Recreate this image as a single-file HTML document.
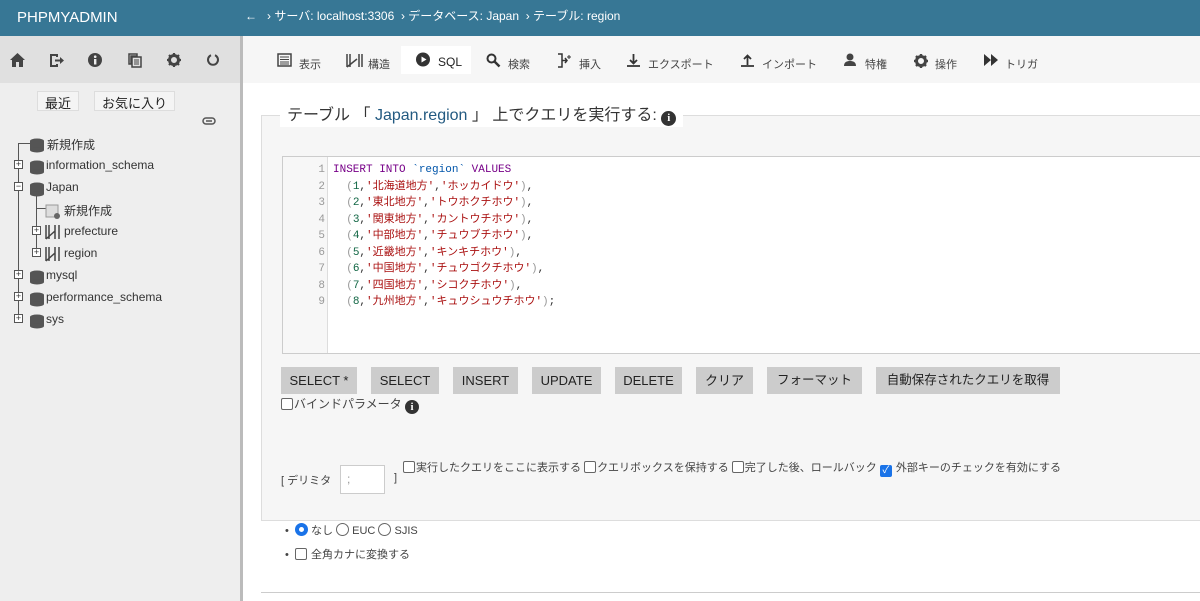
<!DOCTYPE html>
<html><head><meta charset="utf-8">
<style>
*{box-sizing:border-box;margin:0;padding:0}
body{width:1200px;height:601px;overflow:hidden;font-family:"Liberation Sans","Noto Sans CJK JP",sans-serif;font-size:12px;color:#333;background:#fff;position:relative}
.hdr{position:absolute;left:0;top:0;width:1200px;height:36px;background:#377795;color:#fff}
.logo{position:absolute;left:17px;top:9px;font-size:15px;letter-spacing:0}
.bc{position:absolute;left:245px;top:7px;font-size:12px}
.side{position:absolute;left:0;top:36px;width:240px;height:565px;background:#eee}
.sbar{position:absolute;left:240px;top:36px;width:3px;height:565px;background:#bbb}
.ibar{position:absolute;left:0;top:0;width:240px;height:47px;background:#e0e0e0}
.ibar svg{position:absolute;top:17px}
.sbtn{position:absolute;top:55px;height:20px;border:1px solid #ddd;background:#f4f4f4;font-size:13px;padding:1px 7px;color:#222}
.ti{position:absolute;font-size:12px;color:#333;white-space:nowrap}
.vl{position:absolute;background:#555;width:1px}
.hl{position:absolute;background:#555;height:1px}
.pm{position:absolute;width:9px;height:9px;border:1px solid #555;background:#fff;font-size:9px;line-height:7px;text-align:center;color:#333}
.tabs{position:absolute;left:243px;top:36px;width:957px;height:47px;background:#f6f6f6}
.tab{position:absolute;top:22px;font-size:11px;color:#444;white-space:nowrap}
.tab svg{position:absolute;left:-22px;top:-3px}
.sqlt{position:absolute;left:401px;top:46px;width:70px;height:28px;background:#fff}
.fs{position:absolute;left:261px;top:115px;width:960px;height:406px;background:#f6f6f6;border:1px solid #ddd}
.leg{position:absolute;left:280px;top:105px;background:#fff;padding:0 7px;font-size:16px;color:#333;height:22px;line-height:22px;white-space:nowrap}
.leg span{color:#235a81}
.ed{position:absolute;left:282px;top:156px;width:930px;height:198px;background:#fff;border:1px solid #ccc}
.gut{position:absolute;left:0;top:0;width:45px;height:196px;background:#f7f7f7;border-right:1px solid #ddd}
.code{position:absolute;left:0;top:5px;font-family:"Liberation Mono","Noto Sans CJK JP",monospace;font-size:11px;line-height:16.5px;white-space:pre}
.ln{position:absolute;left:0;width:42px;text-align:right;color:#999}
.cl{position:absolute;left:50px}
.k{color:#708}.v{color:#05a}.s{color:#a11}.n{color:#164}.p{color:#999}
.btn{position:absolute;top:367px;height:27px;background:#ccc;font-size:13px;line-height:27px;color:#222;white-space:nowrap;text-align:center}
.cb{display:inline-block;width:12px;height:12px;border:1px solid #666;border-radius:2px;background:#fff;vertical-align:-2px;margin-right:1px}
.t{position:absolute;font-size:11px;color:#444;white-space:nowrap}
.info{display:inline-block;width:14px;height:14px;border-radius:50%;background:#333;color:#fff;font-weight:bold;font-size:11px;line-height:14px;text-align:center;font-family:"Liberation Serif",serif;vertical-align:-2px}
.rad{display:inline-block;width:13px;height:13px;border:1px solid #666;border-radius:50%;background:#fff;vertical-align:-2px}
</style></head><body>
<div class="hdr"><div class="logo">PHPMYADMIN</div>
<div class="bc">←&nbsp;&nbsp;&nbsp;›&nbsp;サーバ: localhost:3306&nbsp;&nbsp;›&nbsp;データベース: Japan&nbsp;&nbsp;›&nbsp;テーブル: region</div></div>

<div class="side">
<div class="ibar">
<svg style="left:10px" width="15" height="14" viewBox="0 0 15 14"><path d="M7.5 0L0 7h2v7h4V9h3v5h4V7h2z" fill="#444"/></svg>
<svg style="left:49px" width="15" height="15" viewBox="0 0 15 15"><path d="M9 1H1v13h8v-3H7v1H3V3h4v1h2z M6 6.5h5V4l4 3.5-4 3.5V8.5H6z" fill="#444"/></svg>
<svg style="left:88px" width="14" height="14"><circle cx="7" cy="7" r="7" fill="#444"/><rect x="6" y="6" width="2.4" height="5.5" fill="#eee"/><circle cx="7.2" cy="3.7" r="1.3" fill="#eee"/></svg>
<svg style="left:128px" width="14" height="15" viewBox="0 0 14 15"><path d="M1 1h8v2H3v8H1z M4 4h9v10H4z" fill="none" stroke="#444" stroke-width="1.5"/><path d="M6 7h5M6 9h5M6 11h5" stroke="#444"/></svg>
<svg style="left:167px" width="14" height="14" viewBox="0 0 14 14"><circle cx="7" cy="7" r="4.5" fill="none" stroke="#444" stroke-width="3"/><path d="M7 0v3M7 11v3M0 7h3M11 7h3M2 2l2 2M10 10l2 2M12 2l-2 2M2 12l2-2" stroke="#444" stroke-width="2.2"/></svg>
<svg style="left:206px" width="14" height="14" viewBox="0 0 14 14"><path d="M9 2.2A5 5 0 1 1 5 2.2" fill="none" stroke="#444" stroke-width="2"/></svg>
</div>
<div class="sbtn" style="left:37px">最近</div>
<div class="sbtn" style="left:94px">お気に入り</div>
<svg style="position:absolute;left:202px;top:81px" width="14" height="8"><rect x="1" y="1" width="12" height="6" rx="3" fill="none" stroke="#555" stroke-width="1.5"/><path d="M4 4h6" stroke="#555" stroke-width="1.5"/></svg>
</div>
<div class="sbar"></div>

<div class="vl" style="left:18px;top:143px;height:177px"></div>
<div class="hl" style="left:18px;top:143px;width:12px"></div>
<div class="vl" style="left:36px;top:194px;height:62px"></div>
<div class="hl" style="left:36px;top:208px;width:10px"></div>
<div class="pm" style="left:14px;top:160px">+</div>
<div class="pm" style="left:14px;top:182px">−</div>
<div class="pm" style="left:32px;top:226px">+</div>
<div class="pm" style="left:32px;top:248px">+</div>
<div class="pm" style="left:14px;top:270px">+</div>
<div class="pm" style="left:14px;top:292px">+</div>
<div class="pm" style="left:14px;top:314px">+</div>
<svg style="position:absolute;left:0;top:0" width="60" height="330">
<g fill="#555">
<g id="d"><ellipse cx="37" cy="141" rx="7" ry="2.5"/><rect x="30" y="141" width="14" height="9"/><ellipse cx="37" cy="150" rx="7" ry="2.5"/></g>
<use href="#d" y="22"/><use href="#d" y="44"/><use href="#d" y="132"/><use href="#d" y="154"/><use href="#d" y="176"/>
</g>
<rect x="46" y="205" width="12" height="12" fill="#ddd" stroke="#999"/><circle cx="57" cy="216" r="3" fill="#666"/>
<g fill="none" stroke="#444" stroke-width="1.5"><path d="M46 225v14M49 225v14M55 225v14M59 225v14M46 239l9-8"/><path d="M46 247v14M49 247v14M55 247v14M59 247v14M46 261l9-8"/></g>
</svg>
<div class="ti" style="left:47px;top:136px">新規作成</div>
<div class="ti" style="left:46px;top:158px">information_schema</div>
<div class="ti" style="left:46px;top:180px">Japan</div>
<div class="ti" style="left:64px;top:202px">新規作成</div>
<div class="ti" style="left:64px;top:224px">prefecture</div>
<div class="ti" style="left:64px;top:246px">region</div>
<div class="ti" style="left:46px;top:268px">mysql</div>
<div class="ti" style="left:46px;top:290px">performance_schema</div>
<div class="ti" style="left:46px;top:312px">sys</div>

<div class="tabs"></div>
<div class="sqlt"></div>
<div class="tab" style="left:299px;top:56px"><svg width="15" height="14"><rect x="1" y="1" width="13" height="12" fill="none" stroke="#444" stroke-width="1.5"/><path d="M3 4h9M3 6.5h9M3 9h9M3 11h9" stroke="#444"/></svg>表示</div>
<div class="tab" style="left:368px;top:56px"><svg width="18" height="15"><path d="M1 1v13M4 1v13M13 1v13M16 1v13M1 14l10-8" fill="none" stroke="#444" stroke-width="1.5"/></svg>構造</div>
<div class="tab" style="left:438px;top:55px;font-size:12px;color:#222"><svg width="15" height="15"><circle cx="7" cy="7.5" r="7" fill="#333"/><path d="M5.5 4.5v6l5-3z" fill="#fff"/></svg>SQL</div>
<div class="tab" style="left:508px;top:56px"><svg width="15" height="15"><circle cx="5.5" cy="5.5" r="4" fill="none" stroke="#333" stroke-width="2"/><path d="M8.5 8.5l5 5" stroke="#333" stroke-width="2.5"/></svg>検索</div>
<div class="tab" style="left:579px;top:56px"><svg width="16" height="15"><path d="M1 1h4v13H1M5 7.5h5M8 5l2 2.5-2 2.5" fill="none" stroke="#333" stroke-width="1.5"/><path d="M12 2v4M10 4h4" stroke="#333"/></svg>挿入</div>
<div class="tab" style="left:648px;top:56px"><svg width="15" height="15"><path d="M7.5 1v9M4 7l3.5 3.5L11 7M1 13h13" fill="none" stroke="#333" stroke-width="1.8"/></svg>エクスポート</div>
<div class="tab" style="left:762px;top:56px"><svg width="15" height="15"><path d="M7.5 12V3M4 6l3.5-3.5L11 6M1 13h13" fill="none" stroke="#333" stroke-width="1.8"/></svg>インポート</div>
<div class="tab" style="left:865px;top:56px"><svg width="14" height="14"><circle cx="7" cy="4" r="3.5" fill="#444"/><path d="M1 13c0-4 3-5 6-5s6 1 6 5z" fill="#444"/></svg>特権</div>
<div class="tab" style="left:935px;top:56px"><svg width="16" height="16"><circle cx="8" cy="8" r="4.5" fill="none" stroke="#444" stroke-width="3"/><path d="M8 1v3M8 12v3M1 8h3M12 8h3M3 3l2 2M11 11l2 2M13 3l-2 2M3 13l2-2" stroke="#444" stroke-width="2.4"/></svg>操作</div>
<div class="tab" style="left:1005px;top:56px"><svg width="16" height="14"><path d="M1 1l7 6-7 6zM8 1l7 6-7 6z" fill="#333"/></svg>トリガ</div>

<div class="fs"></div>
<div class="leg">テーブル 「 <span>Japan.region</span> 」 上でクエリを実行する: <span class="info" style="width:15px;height:15px;color:#fff;vertical-align:-1px">i</span></div>

<div class="ed"><div class="gut"></div>
<div class="code">
<div class="ln" style="top:0">1</div><div class="cl" style="top:0"><span class="k">INSERT INTO</span> <span class="v">`region`</span> <span class="k">VALUES</span></div>
<div class="ln" style="top:16.5px">2</div><div class="cl" style="top:16.5px">  <span class="p">(</span><span class="n">1</span>,<span class="s">'北海道地方'</span>,<span class="s">'ホッカイドウ'</span><span class="p">)</span>,</div>
<div class="ln" style="top:33px">3</div><div class="cl" style="top:33px">  <span class="p">(</span><span class="n">2</span>,<span class="s">'東北地方'</span>,<span class="s">'トウホクチホウ'</span><span class="p">)</span>,</div>
<div class="ln" style="top:49.5px">4</div><div class="cl" style="top:49.5px">  <span class="p">(</span><span class="n">3</span>,<span class="s">'関東地方'</span>,<span class="s">'カントウチホウ'</span><span class="p">)</span>,</div>
<div class="ln" style="top:66px">5</div><div class="cl" style="top:66px">  <span class="p">(</span><span class="n">4</span>,<span class="s">'中部地方'</span>,<span class="s">'チュウブチホウ'</span><span class="p">)</span>,</div>
<div class="ln" style="top:82.5px">6</div><div class="cl" style="top:82.5px">  <span class="p">(</span><span class="n">5</span>,<span class="s">'近畿地方'</span>,<span class="s">'キンキチホウ'</span><span class="p">)</span>,</div>
<div class="ln" style="top:99px">7</div><div class="cl" style="top:99px">  <span class="p">(</span><span class="n">6</span>,<span class="s">'中国地方'</span>,<span class="s">'チュウゴクチホウ'</span><span class="p">)</span>,</div>
<div class="ln" style="top:115.5px">8</div><div class="cl" style="top:115.5px">  <span class="p">(</span><span class="n">7</span>,<span class="s">'四国地方'</span>,<span class="s">'シコクチホウ'</span><span class="p">)</span>,</div>
<div class="ln" style="top:132px">9</div><div class="cl" style="top:132px">  <span class="p">(</span><span class="n">8</span>,<span class="s">'九州地方'</span>,<span class="s">'キュウシュウチホウ'</span><span class="p">)</span>;</div>
</div></div>

<div class="btn" style="left:281px;width:76px">SELECT *</div>
<div class="btn" style="left:371px;width:68px">SELECT</div>
<div class="btn" style="left:453px;width:65px">INSERT</div>
<div class="btn" style="left:532px;width:69px">UPDATE</div>
<div class="btn" style="left:615px;width:67px">DELETE</div>
<div class="btn" style="left:696px;width:57px">クリア</div>
<div class="btn" style="left:767px;width:95px;font-size:12.5px">フォーマット</div>
<div class="btn" style="left:876px;width:184px;font-size:12.5px">自動保存されたクエリを取得</div>

<div class="t" style="left:281px;top:395px;font-size:12px"><span class="cb"></span>バインドパラメータ <span class="info">i</span></div>
<div class="t" style="left:281px;top:472px">[ デリミタ</div>
<div style="position:absolute;left:340px;top:465px;width:45px;height:29px;background:#fff;border:1px solid #ccc;color:#999;font-size:12px;padding:6px 6px">;</div>
<div class="t" style="left:394px;top:472px">]</div>
<div class="t" style="left:403px;top:459px"><span class="cb"></span>実行したクエリをここに表示する <span class="cb"></span>クエリボックスを保持する <span class="cb"></span>完了した後、ロールバック <span class="cb" style="background:#1a73e8;border-color:#1a73e8;color:#fff;font-size:10px;line-height:10px;text-align:center">✓</span> 外部キーのチェックを有効にする</div>

<div class="t" style="left:285px;top:522px">•&nbsp;&nbsp;<span class="rad" style="border:4px solid #1a73e8;background:#fff"></span> なし <span class="rad"></span> EUC <span class="rad"></span> SJIS</div>
<div class="t" style="left:285px;top:546px">•&nbsp;&nbsp;<span class="cb"></span> 全角カナに変換する</div>
<div style="position:absolute;left:261px;top:592px;width:939px;height:1px;background:#ccc"></div>
</body></html>
